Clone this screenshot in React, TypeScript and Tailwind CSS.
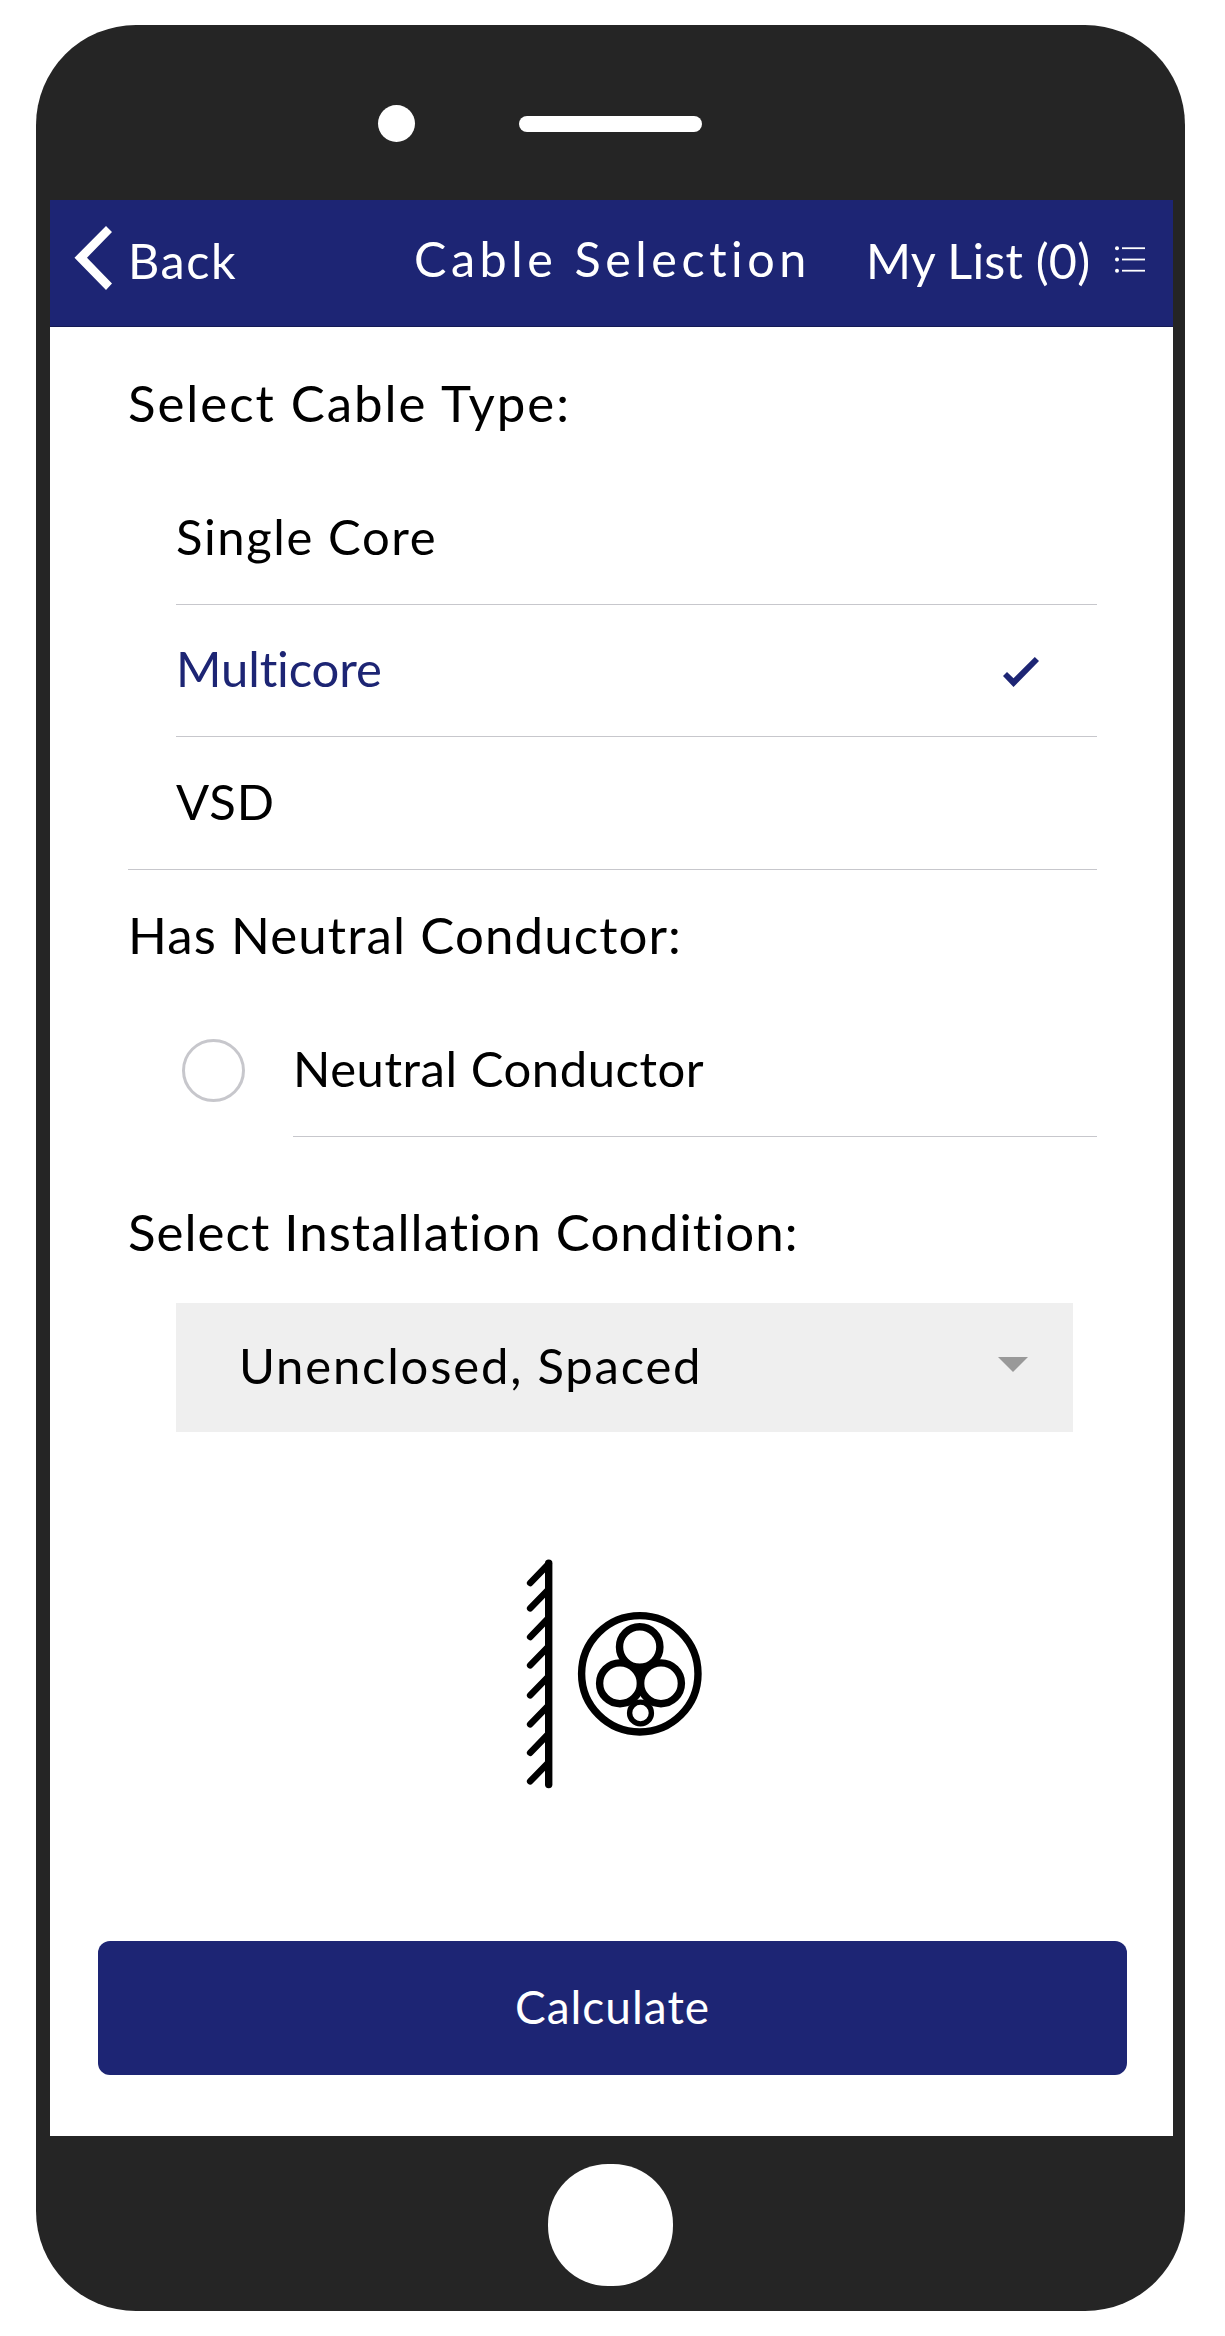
import { useState } from 'react';

const cableTypes = [
  { name: 'Single Core', tracking: 'tracking-[1.6px]' },
  { name: 'Multicore', tracking: 'tracking-[-0.1px]' },
  { name: 'VSD', tracking: 'tracking-[0.9px]' },
];

const hatchEnds = [53, 78.3, 107, 135.3, 165.3, 194.3, 222.7, 251.3];

function BackChevron() {
  return (
    <svg className="mt-[26px] ml-6 h-16 w-[38px] shrink-0" viewBox="0 0 38 64" fill="#fff">
      <path d="M0.5 31.7 32 0l6 6-25 25.7L38 57.6 32 64Z" />
    </svg>
  );
}

function ListIcon() {
  return (
    <svg className="mt-[45px] ml-[25px] h-7 w-[30px] shrink-0" viewBox="0 0 30 28" fill="#fff">
      {[3.2, 14.5, 25.7].map((y) => (
        <g key={y}>
          <circle cx="2" cy={y} r="2" />
          <rect x="7" y={y - 0.9} width="23" height="1.8" />
        </g>
      ))}
    </svg>
  );
}

function CheckMark() {
  return (
    <svg className="mt-[5px] mr-[58px] h-[30px] w-9 shrink-0" viewBox="0 0 36 30" fill="#1d2574">
      <path d="M0 19l4-4.1 6.5 6.3L31.8 0l4.2 4.1L10.5 30Z" />
    </svg>
  );
}

function CableDiagram() {
  return (
    <svg
      className="mt-[126px] ml-[475px] h-[232px] w-[180px] shrink-0"
      viewBox="525 1558 180 232"
      fill="none"
      stroke="#000"
      strokeWidth="7.4"
      strokeLinecap="round"
    >
      <path d="M548.7 1563.3V1784.5" />
      {hatchEnds.map((y) => (
        <path key={y} strokeWidth="6.6" d={`M530.2 ${1530 + y}l18-18.6`} />
      ))}
      <circle cx="639.8" cy="1673.8" r="58.2" />
      <circle cx="639.7" cy="1647" r="20.2" />
      <circle cx="620" cy="1683.3" r="20.4" />
      <circle cx="661" cy="1683.3" r="20.4" />
      <circle cx="640.5" cy="1713" r="10.9" strokeWidth="5.4" />
    </svg>
  );
}

export default function App() {
  const [selected, setSelected] = useState('Multicore');

  return (
    <div className="h-[2336px] w-[1225px] bg-white pt-[25px] pl-9 font-[Lato,sans-serif] text-black">
      <div className="flex h-[2286px] w-[1149px] flex-col rounded-[100px] bg-[#252525] pl-3.5">
        <div className="flex h-[175px] shrink-0 items-start">
          <div className="mt-20 ml-[328px] size-[37px] rounded-full bg-white" />
          <div className="mt-[91px] ml-[104px] h-4 w-[183px] rounded-lg bg-white" />
        </div>

        <div className="flex h-[1936px] w-[1123px] shrink-0 flex-col bg-white">
          <header className="flex h-[127px] shrink-0 items-start border-b border-[#141a55] bg-[#1d2574] text-[48.5px] leading-[60px] whitespace-nowrap text-white">
            <button className="flex w-[364px] items-start">
              <BackChevron />
              <span className="mt-[30px] ml-4 tracking-[1.6px]">Back</span>
            </button>
            <h1 className="mt-7 w-[452px] tracking-[4.55px]">Cable Selection</h1>
            <button className="flex items-start">
              <span className="mt-[30px] w-[224px] text-left tracking-[0.2px]">My List (0)</span>
              <ListIcon />
            </button>
          </header>

          <main className="flex flex-col pr-[76px] pl-[78px] text-[49px] whitespace-nowrap">
            <h2 className="mt-[46px] text-[51px] leading-[60px] tracking-[1.95px]">Select Cable Type:</h2>
            <ul className="mt-10 border-b border-[#c7c7cc]">
              {cableTypes.map(({ name, tracking }) => (
                <li
                  key={name}
                  onClick={() => setSelected(name)}
                  className={`ml-12 flex h-[132px] items-center justify-between border-[#c7c7cc] pb-[3px] not-last:border-b ${
                    name === selected ? 'text-[#1d2574]' : ''
                  }`}
                >
                  <span className={tracking}>{name}</span>
                  {name === selected && <CheckMark />}
                </li>
              ))}
            </ul>

            <h2 className="mt-[35px] text-[51px] leading-[60px] tracking-[1.1px]">Has Neutral Conductor:</h2>
            <div className="mt-10 flex h-[132px] items-center">
              <div className="mb-0.5 ml-[54px] size-[63px] shrink-0 rounded-full border-[3px] border-[#c7c7cc]" />
              <div className="ml-12 flex h-full grow items-center border-b border-[#c7c7cc] pb-[3px] tracking-[0.55px]">
                Neutral Conductor
              </div>
            </div>

            <h2 className="mt-[65px] text-[51px] leading-[60px] tracking-[1.03px]">Select Installation Condition:</h2>
            <div className="mt-[41px] mr-6 ml-12 flex h-[129px] items-center justify-between bg-[#efefef] pr-[45px] pb-[3px] pl-[63px]">
              <span className="tracking-[1.8px]">Unenclosed, Spaced</span>
              <svg className="mb-[3px] h-[15px] w-[30px]" viewBox="0 0 30 15" fill="#999">
                <path d="M0 0H30L15 15Z" />
              </svg>
            </div>
          </main>

          <CableDiagram />

          <button className="mt-[151px] ml-12 flex h-[134px] w-[1029px] shrink-0 items-center justify-center rounded-xl bg-[#1d2574] pb-[3px] text-[46px] tracking-[1px] text-white">
            Calculate
          </button>
        </div>

        <div className="mt-7 ml-[498px] h-[122px] w-[125px] shrink-0 rounded-[60px] bg-white" />
      </div>
    </div>
  );
}
